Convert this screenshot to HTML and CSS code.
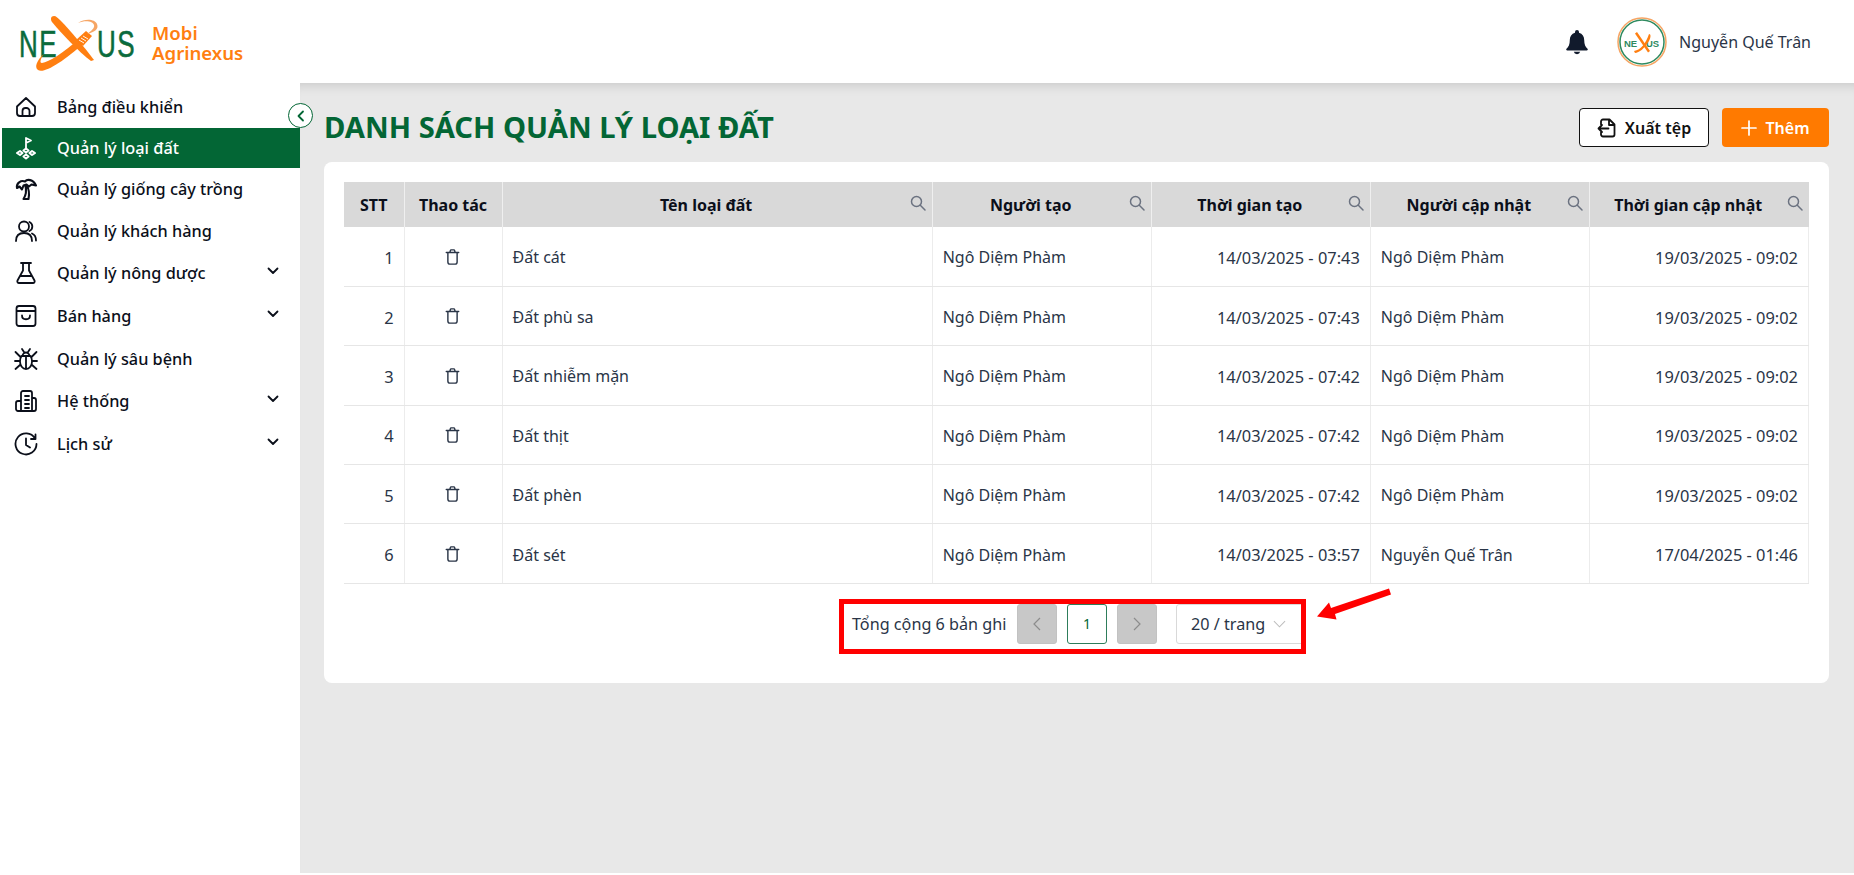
FILE: index.html
```html
<!DOCTYPE html>
<html lang="vi">
<head>
<meta charset="utf-8">
<title>Danh sách quản lý loại đất</title>
<link rel="stylesheet" href="styles.css">
</head>
<body>
<svg class="defs" width="0" height="0" aria-hidden="true">
  <symbol id="i-search" viewBox="0 0 16 16"><circle cx="6.5" cy="6.5" r="5" fill="none" stroke="currentColor" stroke-width="1.5"/><path d="M10.3 10.3 15 15" fill="none" stroke="currentColor" stroke-width="1.5" stroke-linecap="round"/></symbol>
  <symbol id="i-trash" viewBox="0 0 16 18"><path d="M1 4h14M5 4l.6-2.2A1 1 0 0 1 6.600 1h2.800a1 1 0 0 1 1 .8L11 4M2.800 4v10.500A2.500 2.500 0 0 0 5.300 17h5.400a2.500 2.500 0 0 0 2.500-2.500V4" fill="none" stroke="currentColor" stroke-width="1.600" stroke-linecap="round" stroke-linejoin="round"/></symbol>
  <symbol id="i-chev" viewBox="0 0 12 8"><path d="M1.500 1.500 6 6l4.500-4.500" fill="none" stroke="currentColor" stroke-width="1.800" stroke-linecap="round" stroke-linejoin="round"/></symbol>
</svg>

<header class="topbar">
  <div class="brand">
    <svg class="logo" viewBox="0 0 125 60" aria-label="Nexus">
      <text class="logo-text" x="2" y="29.800" transform="scale(1 1.450)">NE</text>
      <text class="logo-text" x="80" y="29.800" transform="scale(1 1.450)">US</text>
      <path class="swoosh" d="M37 2C34 2 33 5 35 8C44 19 62 38 74 47L77 46C68 34 53 16 44 7C41 4 39 2 37 2Z"/>
      <path class="swoosh" d="M27 40C20 46 17 53 21 56C27 60 46 48 67 29L62 25C46 39 32 48 25 49C22 49 24 44 27 40Z"/>
      <path class="swoosh" d="M59 26 69 17 75 22 66 32Z"/>
      <path class="hand" d="M62 26l5 3M64 24l5 3M66 22l5 3"/>
      <path class="swoosh-thin" d="M70 20C78 18 82 15 80 10C78 5 68 4 61 9C68 6 76 7 77 11C78 14 74 17 70 20Z"/>
    </svg>
    <div class="brand-name">Mobi<br>Agrinexus</div>
  </div>
  <div class="user">
    <svg class="bell" viewBox="0 0 24 26" aria-hidden="true"><path d="M12 1a2 2 0 0 0-2 2v.7C6.500 4.700 4.800 7.600 4.800 11c0 4.600-1.300 6.900-3.300 8.700-.6.600-.3 1.800.8 1.800h19.400c1.100 0 1.400-1.200.8-1.800-2-1.800-3.300-4.100-3.300-8.700 0-3.400-1.700-6.300-5.200-7.300V3a2 2 0 0 0-2-2Z" fill="#111a2c"/><path d="M8.800 22.800a3.300 3.300 0 0 0 6.400 0Z" fill="#111a2c"/></svg>
    <svg class="avatar" viewBox="0 0 50 50" aria-hidden="true">
      <circle cx="25" cy="25" r="24" fill="#fff" stroke="#f6a564" stroke-width="1.500"/>
      <circle cx="25" cy="25" r="22" fill="#fff" stroke="#2f8a5f" stroke-width="1.500"/>
      <text class="avatar-text" x="7" y="30">NE</text>
      <text class="avatar-text" x="29" y="30">US</text>
      <path d="M17 34C24 33 29 26 32 17C34 17 34 20 32 24C28 31 22 36 18 36Z" fill="#ff7f11"/>
      <path d="M20 15l13 19-2 1.500L18 16.500Z" fill="#ff7f11"/>
    </svg>
    <span class="user-name">Nguyễn Quế Trân</span>
  </div>
</header>

<div class="shell">
  <nav class="sidebar">
    <a class="nav-item">
      <svg class="nav-icon" viewBox="0 0 24 24"><path d="M3 11.500 12 3l9 8.500V18a3 3 0 0 1-3 3H6a3 3 0 0 1-3-3ZM8.500 21v-5a3 3 0 0 1 3-3h1a3 3 0 0 1 3 3v5"/></svg>
      <span>Bảng điều khiển</span>
    </a>
    <a class="nav-item active">
      <svg class="nav-icon" viewBox="0 0 24 24"><path d="M12 13V2l5 2.500-5 2.500Z"/><path class="thick" d="M12 12.500l2.500 2-2.500 2-2.500-2ZM6 15l2.500 2L6 19l-3-2ZM18 15l3 2-3 2-2.500-2ZM12 18.500l2.500 2L12 22.500l-2.500-2Z"/></svg>
      <span>Quản lý loại đất</span>
    </a>
    <a class="nav-item">
      <svg class="nav-icon" viewBox="0 0 24 24"><path class="thick" d="M3 11C2 6 7 3 11 4.500 13 2 19 2 22 8.500L17.500 7.500 15 9.500 12.500 7.500 9.500 8.500 8 12.500 5.500 9.500ZM12.500 8.500C15 12 15.500 17 14.500 22H9.500C12 18 12.500 13 11.500 9"/></svg>
      <span>Quản lý giống cây trồng</span>
    </a>
    <a class="nav-item">
      <svg class="nav-icon" viewBox="0 0 24 24"><circle cx="10" cy="7.500" r="5"/><path d="M2 22c0-5 3-8 8-8s8 3 8 8M15.500 3a5 5 0 0 1 0 9M18 14.500c2.500 1 4 4 4 7"/></svg>
      <span>Quản lý khách hàng</span>
    </a>
    <a class="nav-item sub">
      <svg class="nav-icon" viewBox="0 0 24 24"><path d="M7 2h10M9 2v7.500L3.500 19.500A1.700 1.700 0 0 0 5 22h14a1.700 1.700 0 0 0 1.500-2.500L15 9.500V2M6.500 15h11"/></svg>
      <span>Quản lý nông dược</span>
      <svg class="nav-chev"><use href="#i-chev"/></svg>
    </a>
    <a class="nav-item sub">
      <svg class="nav-icon" viewBox="0 0 24 24"><rect x="2.500" y="2" width="19" height="20" rx="2.500"/><path d="M3 7h18M8 11.500c0 5 8 5 8 0"/></svg>
      <span>Bán hàng</span>
      <svg class="nav-chev"><use href="#i-chev"/></svg>
    </a>
    <a class="nav-item">
      <svg class="nav-icon" viewBox="0 0 24 24"><path d="M7.500 9h9c1 1.500 1.500 3.500 1.500 5.500 0 4-2.500 7.500-6 7.500s-6-3.500-6-7.500C6 12.500 6.500 10.500 7.500 9ZM8.500 9a3.500 3.500 0 0 1 7 0M12 9v13M8 2l2 3M16 2l-2 3M1.500 5l5 5M22.500 5l-5 5M1 14h5M18 14h5M1.500 22l5-4.500M22.500 22l-5-4.500"/></svg>
      <span>Quản lý sâu bệnh</span>
    </a>
    <a class="nav-item sub">
      <svg class="nav-icon" viewBox="0 0 24 24"><path d="M7 22V4a2 2 0 0 1 2-2h7a2 2 0 0 1 2 2v18M18 9h2a2 2 0 0 1 2 2v9a2 2 0 0 1-2 2H4a2 2 0 0 1-2-2v-6a2 2 0 0 1 2-2h3M11 7h4M11 11h4M11 15h4M11 19h4"/></svg>
      <span>Hệ thống</span>
      <svg class="nav-chev"><use href="#i-chev"/></svg>
    </a>
    <a class="nav-item sub">
      <svg class="nav-icon" viewBox="0 0 24 24"><path d="M21 6.500A10.500 10.500 0 1 0 22.500 12M21.500 2.500v4.500H17M12 6.500V13l4 2.500"/></svg>
      <span>Lịch sử</span>
      <svg class="nav-chev"><use href="#i-chev"/></svg>
    </a>
  </nav>

  <main class="content">
    <button class="collapse" aria-label="Thu gọn">
      <svg viewBox="0 0 10 12"><path d="M7 1.500 2.500 6 7 10.500" fill="none" stroke="currentColor" stroke-width="1.800" stroke-linecap="round" stroke-linejoin="round"/></svg>
    </button>
    <div class="page-head">
      <h1>DANH SÁCH QUẢN LÝ LOẠI ĐẤT</h1>
      <div class="actions">
        <button class="btn btn-outline">
          <svg class="btn-icon" viewBox="0 0 20 20"><path d="M4 6.500V3.500A2 2 0 0 1 6 1.500h6.500L17.500 6.500V16.500a2 2 0 0 1-2 2H6a2 2 0 0 1-2-2v-2M12 1.500V7h5.500M11.500 10.500H1.500M5 7 1.500 10.500 5 14" fill="none" stroke="currentColor" stroke-width="1.800" stroke-linecap="round" stroke-linejoin="round"/></svg>
          Xuất tệp
        </button>
        <button class="btn btn-primary">
          <svg class="btn-icon" viewBox="0 0 16 16"><path d="M8 1v14M1 8h14" fill="none" stroke="currentColor" stroke-width="1.700" stroke-linecap="round"/></svg>
          Thêm
        </button>
      </div>
    </div>

    <section class="card">
      <table class="grid">
        <colgroup>
          <col class="c-stt"><col class="c-act"><col class="c-name"><col class="c-col"><col class="c-col"><col class="c-col"><col class="c-col">
        </colgroup>
        <thead>
          <tr>
            <th>STT</th>
            <th>Thao tác</th>
            <th><div class="th"><span>Tên loại đất</span><svg class="search"><use href="#i-search"/></svg></div></th>
            <th><div class="th"><span>Người tạo</span><svg class="search"><use href="#i-search"/></svg></div></th>
            <th><div class="th"><span>Thời gian tạo</span><svg class="search"><use href="#i-search"/></svg></div></th>
            <th><div class="th"><span>Người cập nhật</span><svg class="search"><use href="#i-search"/></svg></div></th>
            <th><div class="th"><span>Thời gian cập nhật</span><svg class="search"><use href="#i-search"/></svg></div></th>
          </tr>
        </thead>
        <tbody>
          <tr><td class="num">1</td><td class="ctr"><svg class="trash"><use href="#i-trash"/></svg></td><td>Đất cát</td><td>Ngô Diệm Phàm</td><td class="num">14/03/2025 - 07:43</td><td>Ngô Diệm Phàm</td><td class="num">19/03/2025 - 09:02</td></tr>
          <tr><td class="num">2</td><td class="ctr"><svg class="trash"><use href="#i-trash"/></svg></td><td>Đất phù sa</td><td>Ngô Diệm Phàm</td><td class="num">14/03/2025 - 07:43</td><td>Ngô Diệm Phàm</td><td class="num">19/03/2025 - 09:02</td></tr>
          <tr><td class="num">3</td><td class="ctr"><svg class="trash"><use href="#i-trash"/></svg></td><td>Đất nhiễm mặn</td><td>Ngô Diệm Phàm</td><td class="num">14/03/2025 - 07:42</td><td>Ngô Diệm Phàm</td><td class="num">19/03/2025 - 09:02</td></tr>
          <tr><td class="num">4</td><td class="ctr"><svg class="trash"><use href="#i-trash"/></svg></td><td>Đất thịt</td><td>Ngô Diệm Phàm</td><td class="num">14/03/2025 - 07:42</td><td>Ngô Diệm Phàm</td><td class="num">19/03/2025 - 09:02</td></tr>
          <tr><td class="num">5</td><td class="ctr"><svg class="trash"><use href="#i-trash"/></svg></td><td>Đất phèn</td><td>Ngô Diệm Phàm</td><td class="num">14/03/2025 - 07:42</td><td>Ngô Diệm Phàm</td><td class="num">19/03/2025 - 09:02</td></tr>
          <tr><td class="num">6</td><td class="ctr"><svg class="trash"><use href="#i-trash"/></svg></td><td>Đất sét</td><td>Ngô Diệm Phàm</td><td class="num">14/03/2025 - 03:57</td><td>Nguyễn Quế Trân</td><td class="num">17/04/2025 - 01:46</td></tr>
        </tbody>
      </table>

      <div class="pager">
        <span class="pager-total">Tổng cộng 6 bản ghi</span>
        <button class="pg pg-off" aria-label="Trang trước"><svg viewBox="0 0 8 14"><path d="M7 1 1 7l6 6" fill="none" stroke="currentColor" stroke-width="1.200"/></svg></button>
        <button class="pg pg-on">1</button>
        <button class="pg pg-off" aria-label="Trang sau"><svg viewBox="0 0 8 14"><path d="M1 1l6 6-6 6" fill="none" stroke="currentColor" stroke-width="1.200"/></svg></button>
        <div class="pg-select">20 / trang <svg viewBox="0 0 14 8"><path d="M1 1l6 6 6-6" fill="none" stroke="currentColor" stroke-width="1.100"/></svg></div>
        <div class="mark-box"></div>
        <svg class="mark-arrow" viewBox="0 0 76 32"><path d="M73 0.500 75 6.500 19 26 20.500 31.500 1 28.500 13 14.500 15 20Z" fill="#ff0000"/></svg>
      </div>
    </section>
  </main>
</div>
</body>
</html>
```

FILE: styles.css
```css
* { box-sizing: border-box; }
html, body { height: 100%; }
body {
  margin: 0;
  background: #fff;
  color: #111a2c;
  font-family: "Noto Sans", "Open Sans", sans-serif;
  font-size: 16px;
  overflow: hidden;
}
.defs { position: absolute; }

.topbar {
  position: relative;
  z-index: 2;
  height: 83px;
  display: flex;
  align-items: center;
  justify-content: space-between;
  padding: 0 43px 0 17px;
  background: #fff;
}
.brand { display: flex; align-items: center; gap: 10px; }
.logo { width: 125px; height: 60px; margin-top: 4px; }
.logo-text {
  font-family: "Liberation Sans", sans-serif;
  font-size: 26px;
  letter-spacing: 1.500px;
  fill: #0b6b3c;
  stroke: #0b6b3c;
  stroke-width: 0.400px;
}
.swoosh { fill: #ff7f11; }
.swoosh-thin { fill: #f6a564; }
.hand { fill: none; stroke: #fff; stroke-width: 0.900px; }
.brand-name {
  color: #ff7f11;
  font-size: 18.600px;
  font-weight: 600;
  line-height: 20px;
  margin-top: 2px;
}
.user { display: flex; align-items: center; }
.bell { width: 24px; height: 26px; margin-right: 28px; }
.avatar { width: 50px; height: 50px; margin-right: 12px; }
.avatar-text { font-family: "Liberation Sans", sans-serif; font-size: 9.500px; font-weight: 700; fill: #2f8a5f; }
.user-name { font-size: 16px; color: #2a3547; }

.shell { display: flex; height: calc(100% - 85px); }

.sidebar { width: 300px; flex: none; background: #fff; padding-top: 2.500px; }
.nav-item {
  display: flex;
  align-items: center;
  height: 42px;
  margin-left: 2px;
  padding: 0 21px 0 12px;
  color: #0b0f1a;
  font-size: 16.300px;
  font-weight: 500;
}
.nav-item.sub { height: 43px; }
.nav-item.active { background: #036635; color: #fff; height: 40px; }
.nav-item span { flex: 1; }
.nav-icon {
  width: 24px;
  height: 24px;
  margin-right: 19px;
  flex: none;
  fill: none;
  stroke: currentColor;
  stroke-width: 1.800;
  stroke-linecap: round;
  stroke-linejoin: round;
}
.nav-icon .thick { stroke-width: 2.100; }
.nav-chev { width: 12px; height: 8px; margin-top: -4px; color: #0b0f1a; }

.content {
  position: relative;
  flex: 1;
  background: #e8e8e8;
  padding: 25px 25px 0 24px;
  box-shadow: inset 0 12px 12px -10px rgba(0, 0, 0, 0.14);
}
.collapse {
  position: absolute;
  left: -12px;
  top: 20px;
  width: 25px;
  height: 25px;
  padding: 0;
  display: flex;
  align-items: center;
  justify-content: center;
  border: 1px solid #036635;
  border-radius: 50%;
  background: #fff;
  color: #036635;
}
.collapse svg { width: 10px; height: 12px; }

.page-head { display: flex; align-items: center; justify-content: space-between; height: 39px; }
h1 {
  margin: 0;
  color: #036635;
  font-size: 29.200px;
  font-weight: 700;
  line-height: 39px;
}
.actions { display: flex; gap: 13px; }
.btn {
  height: 39px;
  display: flex;
  align-items: center;
  justify-content: center;
  gap: 8px;
  font-family: inherit;
  font-size: 16px;
  font-weight: 600;
  border-radius: 4px;
}
.btn-outline { width: 130px; background: #fff; border: 1px solid #111; color: #111; }
.btn-primary { width: 107px; background: #ff7a00; border: 0; color: #fff; }
.btn-icon { width: 20px; height: 20px; }
.btn-primary .btn-icon { width: 16px; height: 16px; }

.card {
  margin-top: 15px;
  height: 521px;
  padding: 20px 20px 0;
  background: #fff;
  border-radius: 8px;
}

.grid { width: 1465px; table-layout: fixed; border-collapse: collapse; }
.c-stt { width: 60px; }
.c-act { width: 98px; }
.c-name { width: 430px; }
.c-col { width: 219px; }
.grid th {
  height: 45px;
  padding: 0;
  background: #d9d9d9;
  border-right: 1px solid #efefef;
  color: #0b0f1a;
  font-size: 16px;
  font-weight: 700;
  text-align: center;
}
.grid th:last-child { border-right: 0; }
.th { display: flex; align-items: center; padding-right: 6px; }
.th span { flex: 1; }
.search { width: 16px; height: 16px; margin-top: -4px; color: #6b7280; }
.grid td {
  height: 59.400px;
  padding: 2px 10px 0;
  border-right: 1px solid #ececec;
  border-bottom: 1px solid #e6e6e6;
  color: #2a3547;
  font-size: 16px;
}
.grid td.num { text-align: right; font-size: 16.400px; }
.grid td.ctr { text-align: center; padding-right: 12px; }
.trash { width: 15px; height: 16px; margin-top: -5px; color: #2a3547; vertical-align: middle; }

.pager {
  position: relative;
  display: flex;
  align-items: center;
  height: 40px;
  margin: 20px 0 0 508px;
  color: #2a3547;
  font-size: 16.200px;
}
.pager-total { width: 165px; flex: none; white-space: nowrap; }
.pg {
  width: 40px;
  height: 40px;
  flex: none;
  padding: 0;
  display: flex;
  align-items: center;
  justify-content: center;
  font: inherit;
  border-radius: 3px;
  margin-right: 10px;
}
.pg svg { width: 8px; height: 14px; }
.pg-off { background: #c8c8c8; border: 1px solid #c2c2c2; color: #8c8c8c; }
.pg-on { background: #fff; border: 1px solid #2e7d5b; color: #036635; font-size: 14px; }
.pg-select {
  display: flex;
  align-items: center;
  justify-content: space-between;
  width: 129px;
  height: 40px;
  flex: none;
  margin-left: 9px;
  padding: 0 18px 0 14px;
  background: #fff;
  border: 1px solid #d9d9d9;
  border-radius: 3px;
}
.pg-select svg { width: 13px; height: 8px; color: #bdbdbd; }

.mark-box {
  position: absolute;
  left: -13px;
  top: -5px;
  width: 467px;
  height: 55px;
  border: 5px solid #ff0000;
}
.mark-arrow {
  position: absolute;
  left: 464px;
  top: -16px;
  width: 76px;
  height: 32px;
}
```
